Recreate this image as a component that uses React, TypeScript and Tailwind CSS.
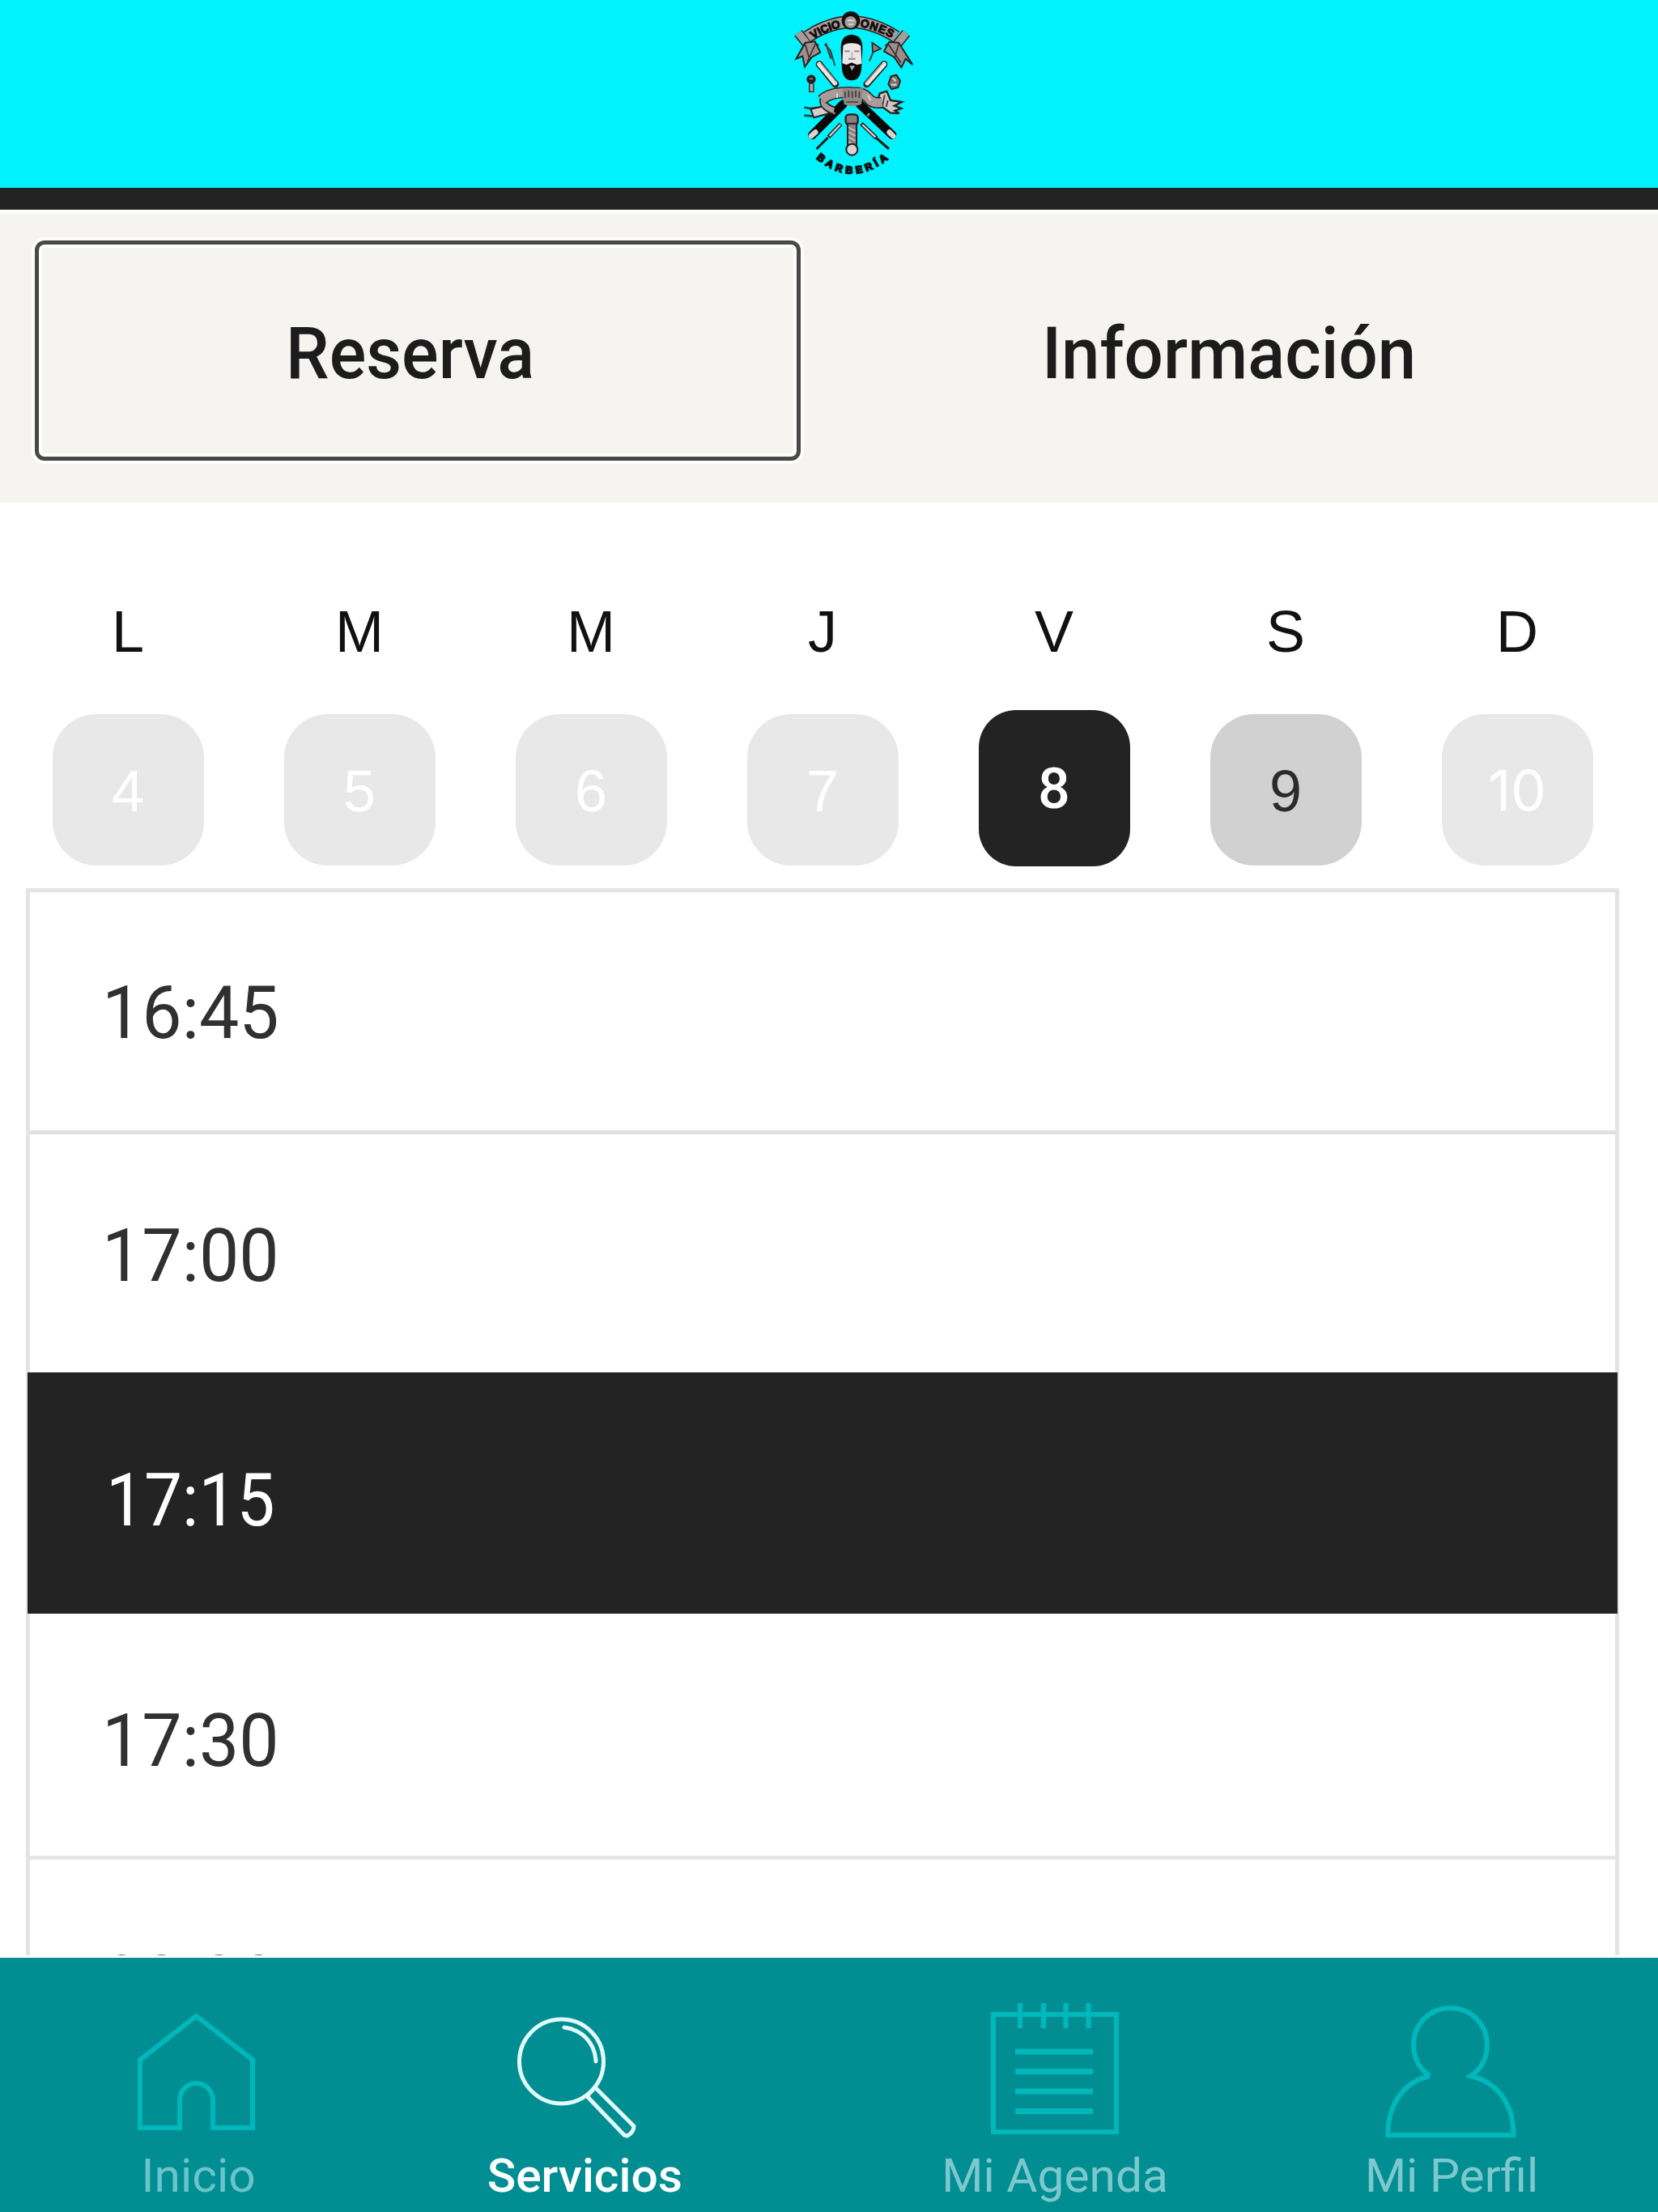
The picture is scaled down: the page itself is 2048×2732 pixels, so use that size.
import type { ReactNode } from "react";

const days = [
  { letter: "L", num: "4", tile: "bg-[#e8e8e8] text-white" },
  { letter: "M", num: "5", tile: "bg-[#e8e8e8] text-white" },
  { letter: "M", num: "6", tile: "bg-[#e8e8e8] text-white" },
  { letter: "J", num: "7", tile: "bg-[#e8e8e8] text-white" },
  { letter: "V", num: "8", selected: true, tile: "" },
  { letter: "S", num: "9", tile: "bg-[#d1d1d1] text-[#2b2b2b]" },
  { letter: "D", num: "10", tile: "bg-[#e8e8e8] text-white" },
];

const helv = "font-['Liberation_Sans',sans-serif]";
const roboto = "font-['Roboto',sans-serif]";
const inter = "font-['Inter',sans-serif]";

function Ribbon({ d, w }: { d: string; w: number }) {
  return (
    <>
      <path d={d} stroke="#2b2020" strokeWidth={w} />
      <path d={d} stroke="#a89c9b" strokeWidth={w - 9} />
    </>
  );
}

function Crest() {
  return (
    <svg viewBox="0 0 570 690" className="h-[230px] w-[190px]" fill="none">
      <defs>
        <path id="arcTopLeft" d="M134 146 Q182 112 246 100" />
        <path id="arcTopRight" d="M306 99 Q372 110 436 148" />
        <path id="arcBottom" d="M144 586 Q276 704 424 580" />
      </defs>

      <Ribbon d="M78 122 L118 172 L150 182" w={36} />
      <Ribbon d="M478 122 L438 172 L404 182" w={36} />
      <path d="M104 158 L70 218 L94 208 L102 248 L128 212 L160 194 L140 154 Z" fill="#9b8f8e" stroke="#2b2020" strokeWidth={6} />
      <path d="M450 158 L502 240 L476 218 L460 250 L434 212 L396 190 L414 156 Z" fill="#9b8f8e" stroke="#2b2020" strokeWidth={6} />
      <path d="M104 164 L120 220 M142 162 L112 228 M450 164 L436 214 M412 164 L458 232" stroke="#3a2e2e" strokeWidth={5} />
      <Ribbon d="M112 136 Q190 84 274 80 Q362 84 440 136" w={48} />
      <g fill="#120c0c" stroke="#120c0c" strokeWidth={3} fontSize={42} fontWeight={700} fontFamily="Liberation Sans, sans-serif">
        <text><textPath href="#arcTopLeft" textLength={112} lengthAdjust="spacingAndGlyphs">VICIO</textPath></text>
        <text><textPath href="#arcTopRight" textLength={126}>ONES</textPath></text>
      </g>
      <circle cx={273} cy={76} r={34} fill="#181010" />
      <circle cx={272} cy={82} r={22} fill="#a39a9a" />
      <path d="M260 76 h26 M264 90 h18" stroke="#e6dfdf" strokeWidth={5} />

      <path d="M176 164 L198 188 L214 244" stroke="#1d4c50" strokeWidth={6} />
      <path d="M180 160 L200 218" stroke="#4d4444" strokeWidth={8} />
      <path d="M352 158 L384 180 L354 194 Z" fill="#8a7e7e" stroke="#2b2020" strokeWidth={5} />
      <path d="M358 188 L342 226" stroke="#3a3a3c" strokeWidth={6} />

      <path d="M156 238 L216 312" stroke="#2c2020" strokeWidth={26} strokeLinecap="round" />
      <path d="M156 238 L214 308" stroke="#ece6e5" strokeWidth={17} strokeLinecap="round" />
      <path d="M162 234 L222 306" stroke="#8f8685" strokeWidth={4} />
      <path d="M396 238 L332 312" stroke="#2c2020" strokeWidth={26} strokeLinecap="round" />
      <path d="M396 238 L334 308" stroke="#ece6e5" strokeWidth={17} strokeLinecap="round" />
      <path d="M390 234 L328 306" stroke="#8f8685" strokeWidth={4} />

      <path d="M244 386 L130 500" stroke="#0d0808" strokeWidth={32} strokeLinecap="round" />
      <path d="M306 386 L426 500" stroke="#0d0808" strokeWidth={32} strokeLinecap="round" />
      <path d="M142 490 L126 504 M416 490 L430 504" stroke="#dad2d2" strokeWidth={20} strokeLinecap="round" />
      <path d="M206 414 L214 422 M334 430 L342 420" stroke="#8e8383" strokeWidth={8} />
      <path d="M236 460 L190 508" stroke="#2a2020" strokeWidth={15} />
      <path d="M234 462 L194 504" stroke="#d8d0d0" strokeWidth={7} />
      <path d="M188 510 L146 552 M368 512 L414 552" stroke="#221818" strokeWidth={9} />
      <path d="M312 458 L368 512" stroke="#2a2020" strokeWidth={15} />
      <path d="M316 462 L364 508" stroke="#d8d0d0" strokeWidth={7} />

      <circle cx={126} cy={294} r={17} fill="#2b2020" />
      <path d="M120 292 h12" stroke="#978c8c" strokeWidth={5} />
      <path d="M127 310 V342" stroke="#3b2f2f" strokeWidth={20} />
      <path d="M127 312 V338" stroke="#b3a9a9" strokeWidth={11} />
      <path d="M412 312 L422 282 L442 278 L456 300 L448 324 L424 330 Z" fill="#7c7070" stroke="#2b2020" strokeWidth={6} />
      <path d="M422 314 L442 314 M428 290 L440 300" stroke="#d6cece" strokeWidth={7} />

      <path d="M188 394 L124 402 L100 398 M100 428 L128 430 L180 424" stroke="#15474a" strokeWidth={8} />
      <path d="M124 404 L182 392 L204 416 L136 436 Z" fill="#d6cece" stroke="#2b2020" strokeWidth={6} />
      <path d="M210 410 Q158 392 176 358" stroke="#2b2020" strokeWidth={30} />
      <path d="M210 410 Q158 392 176 358" stroke="#a89c9b" strokeWidth={20} />
      <path d="M380 346 L406 338 L420 372 L462 378 L434 392 L460 402 L436 410 L452 420 L420 418 L392 398 L366 392 Z" fill="#cfc7c7" stroke="#2b2020" strokeWidth={7} />
      <path d="M398 352 L390 394 M410 372 L404 396" stroke="#4b4040" strokeWidth={6} />
      <Ribbon d="M166 370 Q196 340 276 342 Q320 342 336 362 Q352 386 388 380" w={42} />
      <path d="M240 326 L318 326 L312 386 Q278 400 248 386 Z" fill="#928887" />
      <path d="M252 340 V362 M265 336 V360 M278 338 V362 M291 336 V360 M304 340 V362 M256 378 H300" stroke="#433838" strokeWidth={5} />
      <path d="M222 346 V362 M336 352 L346 372" stroke="#ded6d6" strokeWidth={6} />

      <path d="M236 182 Q234 130 276 128 Q318 130 316 182 L312 258 Q306 298 276 298 Q246 298 240 258 Z" fill="#0d0808" />
      <path d="M244 170 Q254 160 276 160 Q298 160 310 170 L313 236 L296 240 L276 232 L256 240 L241 234 Z" fill="#ece6e6" />
      <path d="M250 190 h18 M286 190 h18 M264 218 h26" stroke="#8d8484" strokeWidth={6} />
      <path d="M277 192 V214" stroke="#c3baba" strokeWidth={6} />
      <path d="M268 244 L277 262 L288 244 Z" fill="#b5acac" />

      <rect x={254} y={424} width={45} height={38} rx={12} fill="#897e7e" stroke="#261c1c" strokeWidth={7} />
      <rect x={261} y={458} width={33} height={86} fill="#8a8080" stroke="#261c1c" strokeWidth={6} />
      <path d="M264 472 L290 486 M264 490 L290 504 M264 508 L290 522 M264 526 L290 538" stroke="#c9c0c0" strokeWidth={5} />
      <circle cx={277} cy={554} r={21} fill="#d9d1d1" stroke="#261c1c" strokeWidth={6} />

      <text fill="#0a1214" stroke="#0a1214" strokeWidth={5} fontSize={38} fontWeight={700} fontFamily="Liberation Sans, sans-serif">
        <textPath href="#arcBottom" textLength={296}>BARBERÍA</textPath>
      </text>
    </svg>
  );
}

function NavItem({ viewBox, label, labelClass, iconClass, className, children }: {
  viewBox: string;
  label: string;
  labelClass: string;
  iconClass: string;
  className: string;
  children: ReactNode;
}) {
  return (
    <a className={`flex w-[400px] flex-col items-center ${className}`}>
      <svg viewBox={viewBox} className={`h-[240px] w-[400px] ${iconClass}`} fill="none" stroke="currentColor" strokeWidth={6}>
        {children}
      </svg>
      <span className={`${roboto} mt-[1px] block scale-x-[1.02] text-[57.5px] leading-none whitespace-nowrap ${labelClass}`}>{label}</span>
    </a>
  );
}

function Slot({ time, className, textClass = "text-[#303030] scale-x-[0.965]" }: { time: string; className: string; textClass?: string }) {
  return (
    <li className={className}>
      <span className={`${roboto} block w-fit origin-left text-[91px] leading-none ${textClass}`}>{time}</span>
    </li>
  );
}

export default function App() {
  return (
    <div className="flex h-[2732px] w-[2048px] flex-col overflow-hidden bg-white">
      <header className="flex h-[259px] shrink-0 items-start border-b-[27px] border-[#232323] bg-[#00f3fc] pl-[960px]">
        <Crest />
      </header>

      <nav className={`${roboto} flex h-[362px] shrink-0 border-t-[5px] border-[#fdfdfc] bg-[#f5f4f1] pt-[33px] pl-[43px] text-[88.5px] leading-none font-medium text-[#1c1c1c]`}>
        <button className="flex h-[272px] w-[946px] items-start justify-center rounded-[12px] border-[5px] border-[#484848] pt-[91px] pr-[18px] leading-none shadow-[0_0_0_4px_#fdfdfc,inset_0_0_0_4px_#fdfdfc]">
          <span className="block scale-x-[0.962]">Reserva</span>
        </button>
        <button className="flex flex-1 items-start justify-center pt-[96px] leading-none">
          <span className="block scale-x-[0.963]">Información</span>
        </button>
      </nav>

      <section className="grid h-[476px] shrink-0 grid-cols-[repeat(7,286px)] pt-[123px] pl-[15px]">
        {days.map((d, i) => (
          <div key={i} className="flex flex-col items-center">
            <span className={`${helv} block text-[72px] leading-none text-[#111]`}>{d.letter}</span>
            {d.selected ? (
              <div className={`${roboto} mt-[61px] flex h-[193px] w-[187px] justify-center rounded-[46px] bg-[#232323] pt-[62px] text-[70px] leading-none font-medium text-white`}>{d.num}</div>
            ) : (
              <div className={`mt-[66px] flex h-[187px] w-[187px] justify-center rounded-[54px] leading-none ${d.tile} ${d.num === "10" ? `${inter} pt-[60px] text-[69px]` : `${helv} pt-[59px] text-[72px]`}`}>{d.num}</div>
            )}
          </div>
        ))}
      </section>

      <main className="h-[1318px] shrink-0 overflow-hidden pr-[48px] pl-[32px]">
        <ul className="border-x-[5px] border-t-[5px] border-[#e4e4e4]">
          <Slot time="16:45" className="h-[299px] border-b-[5px] border-[#e0e0e0] pt-[104px] pl-[89px]" />
          <Slot time="17:00" className="h-[294px] pt-[105px] pl-[89px]" />
          <Slot time="17:15" className="-mx-[3px] h-[298px] bg-[#232323] pt-[113px] pl-[97px]" textClass="text-white scale-x-[0.92]" />
          <Slot time="17:30" className="h-[304px] border-b-[5px] border-[#e6e6e6] pt-[112px] pl-[89px]" />
          <Slot time="20:00" className="h-[299px] pt-[107px] pl-[89px]" />
        </ul>
      </main>
      <div className="h-[3px] shrink-0" />

      <footer className="flex flex-1 bg-[#008e93]">
        <NavItem viewBox="44 2418 400 240" label="Inicio" labelClass="text-[#6cc3ca]" iconClass="text-[#00b8bc]" className="ml-[45px]">
          <path d="M172 2628 V2544 L241.500 2490 L311 2544 V2628 H262 V2594 A20.500 21 0 0 0 221 2594 V2628 Z" />
        </NavItem>
        <NavItem viewBox="522 2418 400 240" label="Servicios" labelClass="font-medium text-white" iconClass="text-[#e2fafa]" className="ml-[77px]">
          <g strokeWidth={5} strokeLinecap="round" strokeLinejoin="round">
            <circle cx="693.500" cy="2546" r="52" />
            <path d="M697 2504 C720 2507 735 2524 736 2546" />
            <path d="M735 2578 L783 2626 Q783 2633 775 2638 L771 2637 L725 2589 Z" />
          </g>
        </NavItem>
        <NavItem viewBox="1103 2418 400 240" label="Mi Agenda" labelClass="text-[#7cc8cd]" iconClass="text-[#00b8bc]" className="ml-[181px]">
          <rect x="1227" y="2488" width="152" height="145" />
          <path d="M1260 2474 V2505 M1289 2474 V2505 M1316.500 2474 V2505 M1344.500 2474 V2505" />
          <path d="M1254 2534 H1350 M1254 2558.500 H1350 M1254 2583 H1350 M1254 2607.500 H1350" strokeWidth={7} />
        </NavItem>
        <NavItem viewBox="1593 2418 400 240" label="Mi Perfil" labelClass="text-[#7cc8cd]" iconClass="text-[#00b8bc]" className="ml-[90px]">
          <path d="M1766 2564 C1753 2555 1746 2541 1746 2526 C1746 2500 1766 2480 1791.500 2480 C1817 2480 1837 2500 1837 2526 C1837 2541 1830 2555 1817 2564 C1848 2571 1870 2598 1869.500 2637 H1714.500 C1714 2598 1735 2571 1766 2564" />
        </NavItem>
      </footer>
    </div>
  );
}
